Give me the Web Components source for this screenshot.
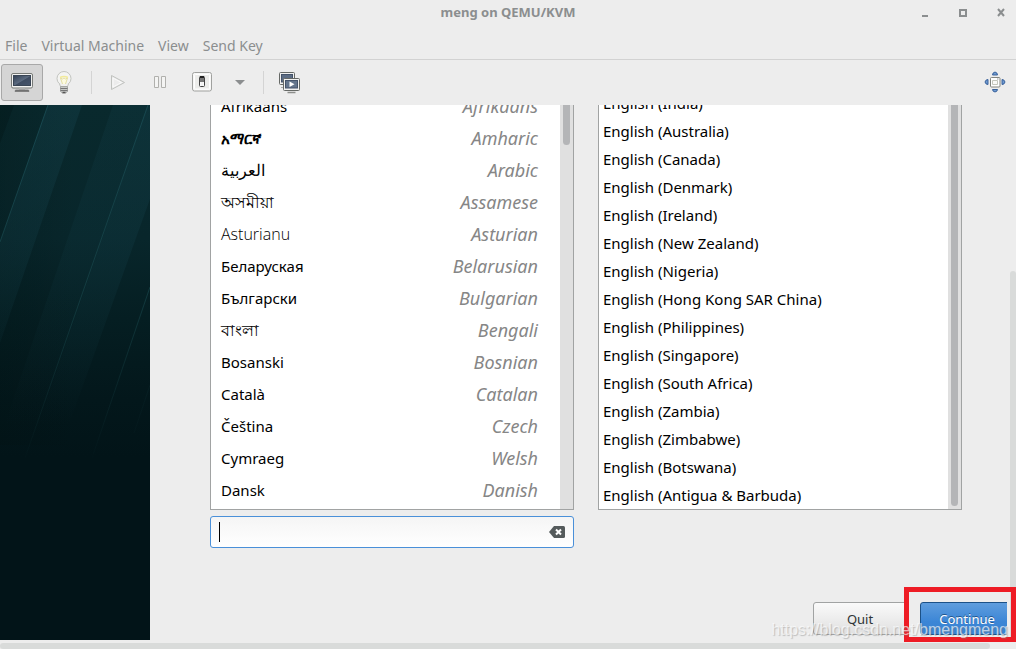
<!DOCTYPE html>
<html lang="en">
<head>
<meta charset="utf-8">
<title>meng on QEMU/KVM</title>
<style>
html, body { height: 100%; margin: 0; }
body { font-family: "Noto Sans", "Open Sans", sans-serif; font-size: 15px; background: #ededed; color: #000; overflow: hidden; }
</style>
</head>
<body>
<vm-window>
  <vm-title-bar slot="chrome">meng on QEMU/KVM</vm-title-bar>
  <vm-menu-bar slot="chrome"></vm-menu-bar>
  <vm-tool-bar slot="chrome"></vm-tool-bar>
  <guest-wallpaper slot="screen"></guest-wallpaper>
  <install-form slot="screen"></install-form>
  <mark-box slot="overlay"></mark-box>
  <water-mark slot="overlay">https://blog.csdn.net/bmengmeng</water-mark>
</vm-window>

<script>
const define = (name, html, setup) => customElements.define(name, class extends HTMLElement {
  connectedCallback() {
    if (this.shadowRoot) return;
    this.attachShadow({ mode: "open" }).innerHTML = html;
    if (setup) setup(this, this.shadowRoot);
  }
});

define("vm-title-bar", `
<style>
:host { display: grid; grid-template-columns: 1fr auto 1fr; align-items: center; height: 26px; color: #8b8e8f; }
h1 { grid-column: 2; margin: 0; font-size: 13px; line-height: 24px; padding-bottom: 2px; font-weight: bold; }
.controls { justify-self: end; display: flex; gap: 16px; padding-right: 4px; }
button { all: unset; width: 22px; height: 24px; display: grid; place-items: center; }
svg { display: block; }
</style>
<h1><slot></slot></h1>
<div class="controls">
  <button aria-label="Minimize"><svg width="12" height="12"><path d="M3 8h6v2H3z" fill="#8b8e8f"/></svg></button>
  <button aria-label="Maximize"><svg width="12" height="12"><path d="M3 3h6v6H3z" fill="none" stroke="#8b8e8f" stroke-width="2"/></svg></button>
  <button aria-label="Close"><svg width="12" height="12"><path d="M3 2l6 7M9 2l-6 7" stroke="#8b8e8f" stroke-width="2"/></svg></button>
</div>`);

define("vm-menu-bar", `
<style>
:host { display: block; border-bottom: 1px solid #d2d2d2; }
nav { display: flex; gap: 14px; height: 33px; padding: 0 5px; box-sizing: border-box; align-items: center; }
button { all: unset; font-size: 14px; line-height: 18px; padding-top: 6px; color: #8b8e8f; white-space: nowrap; }
</style>
<nav><button>File</button><button>Virtual Machine</button><button>View</button><button>Send Key</button></nav>`);

define("vm-tool-bar", `
<style>
:host { display: flex; align-items: center; height: 45px; padding: 0 0 0 1px; }
button { all: unset; box-sizing: border-box; width: 42px; height: 37px; padding-bottom: 2px; display: grid; place-items: center; }
button.on { background: #d5d5d5; border: 1px solid #a8a8a8; border-radius: 3px; }
button.narrow { width: 34px; }
hr { width: 1px; height: 23px; border: 0; margin: 0 5px 0 6px; background: #d4d4d4; }
.last { margin-left: auto; }
svg { display: block; }
</style>
<button class="on" aria-label="Console">
  <svg width="24" height="24"><defs><linearGradient id="a" x2="1" y2="1"><stop offset="0" stop-color="#303e52"/><stop offset=".5" stop-color="#5c6b80"/><stop offset=".55" stop-color="#3f4d62"/><stop offset="1" stop-color="#46556b"/></linearGradient></defs>
  <rect x="1.500" y="3.500" width="21" height="14.500" rx="1.500" fill="#f1f1f0" stroke="#777a77"/><rect x="3.500" y="5.500" width="17" height="10" fill="url(#a)" stroke="#3a4656"/><path d="M9 18.500h6v2H9z" fill="#bbb"/><path d="M5.500 20h13l.5 1.500H5z" fill="#777" stroke="#666" stroke-width=".6"/></svg></button>
<button aria-label="Details">
  <svg width="24" height="24"><circle cx="12" cy="8.500" r="7" fill="#f4f4f2" stroke="#c2c4c0"/><path d="M8 13h8v3H8z" fill="#f1f1ef"/><path d="M7.500 14l1 2.500M16.500 14l-1 2.500" stroke="#c2c4c0"/><path d="M10.500 14l-2-6 2 1 1.500-1 1.500 1 2-1-2 6" fill="#fdfbe0" stroke="#e4dfa4" stroke-width="1"/><path d="M8 7.500q4-2 8 0" stroke="#f2ea9a" stroke-width="1.500" fill="none"/><path d="M8.500 16.500h7v5l-2 1.500h-3l-2-1.500z" fill="#c6c8c6" stroke="#999b98" stroke-width=".8"/><path d="M8.500 18.500h7M8.500 20.500h7" stroke="#777" stroke-width="1"/><path d="M10.500 22.500h3" stroke="#555" stroke-width="1.500"/></svg></button>
<hr>
<button aria-label="Run">
  <svg width="24" height="24"><path d="M5.500 5.500v14l13-7z" fill="#ececec" stroke="#c0c2bf" stroke-linejoin="round"/><path d="M7 8v9l8.500-4.500z" fill="none" stroke="#fafafa"/></svg></button>
<button aria-label="Pause">
  <svg width="24" height="24"><g fill="#f4f4f3" stroke="#b0b0ad"><path d="M6.500 6.500h4v11h-4zM13.500 6.500h4v11h-4z"/></g></svg></button>
<button aria-label="Shut down">
  <svg width="24" height="24"><rect x="2.500" y="2.500" width="19" height="18.500" rx="2" fill="#f7f7f6" stroke="#a0a19f"/><rect x="4.500" y="4.500" width="15" height="14.500" rx="1" fill="#ededeb" stroke="#fff"/><rect x="9.500" y="6.500" width="5" height="10" rx="1" fill="#fff" stroke="#444"/><path d="M10 7h4v5h-4z" fill="#777"/><path d="M10 6h4v2h-4z" fill="#222"/><path d="M10.500 12h3v4h-3z" fill="#f4f4f4"/></svg></button>
<button class="narrow" aria-label="Shut down menu">
  <svg width="12" height="12"><path d="M1 4h10L6 9z" fill="#8b8e8f"/></svg></button>
<hr>
<button aria-label="Snapshots">
  <svg width="24" height="24"><rect x="1.500" y="2.500" width="15" height="12" rx="1" fill="#f1f1f0" stroke="#666966"/><rect x="3.500" y="4.500" width="11" height="7.500" fill="#5d6d84" stroke="#44536a"/><path d="M3 17.500h5" stroke="#aaa"/><rect x="5.500" y="8.500" width="16" height="12" rx="1" fill="#f1f1f0" stroke="#666966"/><rect x="7.500" y="10.500" width="12" height="7.500" fill="#64758c" stroke="#44536a"/><path d="M11.500 11.500v5.500l5-2.750z" fill="#fff"/><path d="M9.500 22.500h8" stroke="#8d8f8c" stroke-width="1.500"/></svg></button>
<button class="last" aria-label="Fullscreen">
  <svg width="24" height="24"><g fill="#6f9ad0" stroke="#2c5794" stroke-width=".9"><path d="M9.500 5q0-2.500 2.500-3 2.500.5 2.500 3zM9.500 19.500q0 2 2.500 2.500 2.500-.5 2.500-2.500zM5 9.500q-2.500 0-3 2.500.5 2.500 3 2.500zM19 9.500q2.500 0 3 2.500-.5 2.500-3 2.500z"/></g><rect x="7.500" y="7.500" width="9.500" height="9.500" rx="1" fill="#fff" stroke="#83857f"/><path d="M9.500 10.500h5v4h-5z" fill="#fafaf8" stroke="#c5c7bd"/><path d="M14 9h1.500" stroke="#999"/></svg></button>`);

define("guest-wallpaper", `
<style>
:host { display: block; width: 150px; flex: none; background: #021418; }
svg { display: block; width: 100%; height: 100%; }
</style>
<svg viewBox="0 0 150 535" preserveAspectRatio="none" aria-hidden="true">
  <defs>
    <linearGradient id="base" x2="0" y2="1"><stop offset="0" stop-color="#09292d"/><stop offset=".25" stop-color="#08262b"/><stop offset=".4" stop-color="#051e22"/><stop offset=".55" stop-color="#03171b"/><stop offset=".66" stop-color="#021418"/></linearGradient>
    <linearGradient id="fade" gradientUnits="userSpaceOnUse" x1="0" y1="0" x2="0" y2="320"><stop offset="0" stop-color="#14404a" stop-opacity=".42"/><stop offset=".5" stop-color="#14404a" stop-opacity=".25"/><stop offset="1" stop-color="#14404a" stop-opacity="0"/></linearGradient>
    <linearGradient id="ray" gradientUnits="userSpaceOnUse" x1="0" y1="0" x2="0" y2="360"><stop offset="0" stop-color="#17474f"/><stop offset=".5" stop-color="#154146" stop-opacity=".8"/><stop offset="1" stop-color="#123a3e" stop-opacity="0"/></linearGradient>
    <linearGradient id="dim" x2="1" y2="0"><stop offset="0" stop-color="#001010" stop-opacity=".2"/><stop offset=".5" stop-color="#001010" stop-opacity="0"/></linearGradient>
  </defs>
  <path fill="url(#base)" d="M0 0h150v535H0z"/>
  <path fill="url(#dim)" d="M0 0h150v340H0z"/>
  <path fill="#001010" opacity=".25" d="M0 0h14L0 38z"/>
  <g fill="url(#fade)">
    <path d="M48 0h34L0 238V137z"/>
    <path d="M113 0h35L28 350H0v-17z" opacity=".6"/>
    <path d="M148 0h2v94L58 350H28z"/>
  </g>
  <g stroke="url(#ray)" fill="none"><path d="M48 0L0 137M148 0L25 353M150 182L92 353"/><path d="M150 280l-16 48" opacity=".5"/></g>
</svg>`);

define("scroll-track", `
<style>
:host { display: flex; flex-direction: column; width: 13px; flex: none; background: #e0e0e0; align-items: center; }
i { display: block; width: 7px; background: #b4b5b7; border-radius: 0 0 4px 4px; height: 40px; }
:host([long]) i { height: auto; flex: 1; margin-bottom: 3px; }
</style><i></i>`);

define("language-list", `
<style>
:host { display: flex; min-height: 0; box-sizing: border-box; overflow: hidden; background: #fff; border: 1px solid #a1a3a3; border-top: 0; }
.view { flex: 1; min-width: 0; overflow: hidden; display: flex; flex-direction: column; justify-content: flex-end; }
ul { list-style: none; margin: 0; padding: 0 22px 3px 10px; }
li { display: flex; justify-content: space-between; align-items: center; height: 32px; line-height: 24px; white-space: nowrap; font-size: 15px; }
em { font-size: 18px; color: #868686; }
:lang(am) { font-weight: bold; }
:lang(ar), :lang(as), :lang(bn) { font-size: 16px; }
:lang(ast) { font-family: "Open Sans", "Noto Sans", sans-serif; font-weight: 300; font-size: 16px; }
</style>
<div class="view"><ul></ul></div><scroll-track></scroll-track>`, (host, root) => {
  const rows = [["Afrikaans", "Afrikaans", "af"], ["አማርኛ", "Amharic", "am"], ["العربية", "Arabic", "ar"], ["অসমীয়া", "Assamese", "as"], ["Asturianu", "Asturian", "ast"], ["Беларуская", "Belarusian", "be"], ["Български", "Bulgarian", "bg"], ["বাংলা", "Bengali", "bn"], ["Bosanski", "Bosnian", "bs"], ["Català", "Catalan", "ca"], ["Čeština", "Czech", "cs"], ["Cymraeg", "Welsh", "cy"], ["Dansk", "Danish", "da"]];
  root.querySelector("ul").innerHTML = rows.map(([n, e, l]) => `<li><span lang="${l}">${n}</span><em>${e}</em></li>`).join("");
});

define("locale-list", `
<style>
:host { display: flex; min-height: 0; box-sizing: border-box; overflow: hidden; background: #fff; border: 1px solid #a1a3a3; border-top: 0; }
.view { flex: 1; min-width: 0; overflow: hidden; display: flex; flex-direction: column; justify-content: flex-end; }
ul { list-style: none; margin: 0; padding: 0 4px; }
li { height: 28px; line-height: 28px; white-space: nowrap; font-size: 15px; }
</style>
<div class="view"><ul></ul></div><scroll-track long></scroll-track>`, (host, root) => {
  root.querySelector("ul").innerHTML = ["India", "Australia", "Canada", "Denmark", "Ireland", "New Zealand", "Nigeria", "Hong Kong SAR China", "Philippines", "Singapore", "South Africa", "Zambia", "Zimbabwe", "Botswana", "Antigua &amp; Barbuda"].map(c => `<li>English (${c})</li>`).join("");
});

define("search-entry", `
<style>
:host { display: flex; align-items: center; box-sizing: border-box; height: 32px; padding: 0 8px; border: 1px solid #4a90d9; border-radius: 3px; background: linear-gradient(#f5f5f5, #fff); }
input { all: unset; flex: 1; min-width: 0; height: 20px; font-size: 15px; caret-color: transparent; background: linear-gradient(#000, #000) 0 0 / 1px 100% no-repeat; }
button { all: unset; }
svg { display: block; }
</style>
<input type="text" aria-label="Search languages">
<button aria-label="Clear"><svg width="16" height="12"><path d="M5 0h9.500q1.500 0 1.500 1.500v9q0 1.500-1.500 1.500H5L0 6z" fill="#555b5c"/><path d="M7 3.500l5 5M12 3.500l-5 5" stroke="#fff" stroke-width="2"/></svg></button>`);

define("push-button", `
<style>
:host { display: block; }
button { box-sizing: border-box; display: block; width: 94px; height: 33px; padding: 0; font: inherit; font-size: 13px; line-height: 18px; color: #2e3436; border: 1px solid #a1a3a3; border-radius: 3px; background: linear-gradient(#fafafa, #e0e0e0); }
:host([primary]) button { color: #fff; border-color: #1c5187; background: linear-gradient(#5f9ddd, #3c86d6 60%, #3a82d0); text-shadow: 0 -1px #22558a; }
</style>
<button><slot></slot></button>`);

define("install-form", `
<style>
:host { flex: 1; min-width: 0; display: flex; flex-direction: column; padding: 0 45px 5px 60px; overflow: hidden; }
.lists { flex: 1; min-height: 0; display: grid; grid-template: minmax(0, 1fr) auto / 1fr 1fr; column-gap: 24px; row-gap: 6px; }
.buttons { display: flex; justify-content: flex-end; gap: 13px; margin: 54px -52px 0 0; }
</style>
<div class="lists"><language-list></language-list><locale-list></locale-list><search-entry></search-entry></div>
<div class="buttons"><push-button>Quit</push-button><push-button primary>Continue</push-button></div>`);

define("mark-box", `
<style>:host { position: absolute; right: 0; bottom: 7px; box-sizing: border-box; width: 112px; height: 55px; border: 5px solid #ee1c25; pointer-events: none; }</style>`);

define("water-mark", `
<style>:host { position: absolute; right: 8px; bottom: 9px; font: 16px/20px "Liberation Sans", Arial, sans-serif; color: rgba(255,255,255,.65); text-shadow: 1px 1px 1px rgba(120,120,120,.4); pointer-events: none; }</style><slot></slot>`);

define("vm-window", `
<style>
:host { display: flex; flex-direction: column; height: 100vh; position: relative; background: #ededed; }
.body { flex: 1; min-height: 0; display: flex; }
.screen { flex: 1; min-width: 0; display: flex; overflow: hidden; }
.vbar { width: 6px; margin-left: 3px; display: flex; padding-top: 166px; }
.vbar i { flex: 1; background: #d9dbda; border-radius: 3px; }
.hbar { height: 6px; margin-top: 3px; padding-right: 26px; display: flex; }
.hbar i { flex: 1; background: #d9dbda; border-radius: 3px; }
</style>
<slot name="chrome"></slot>
<div class="body"><div class="screen"><slot name="screen"></slot></div><div class="vbar"><i></i></div></div>
<div class="hbar"><i></i></div>
<slot name="overlay"></slot>`);
</script>
</body>
</html>
